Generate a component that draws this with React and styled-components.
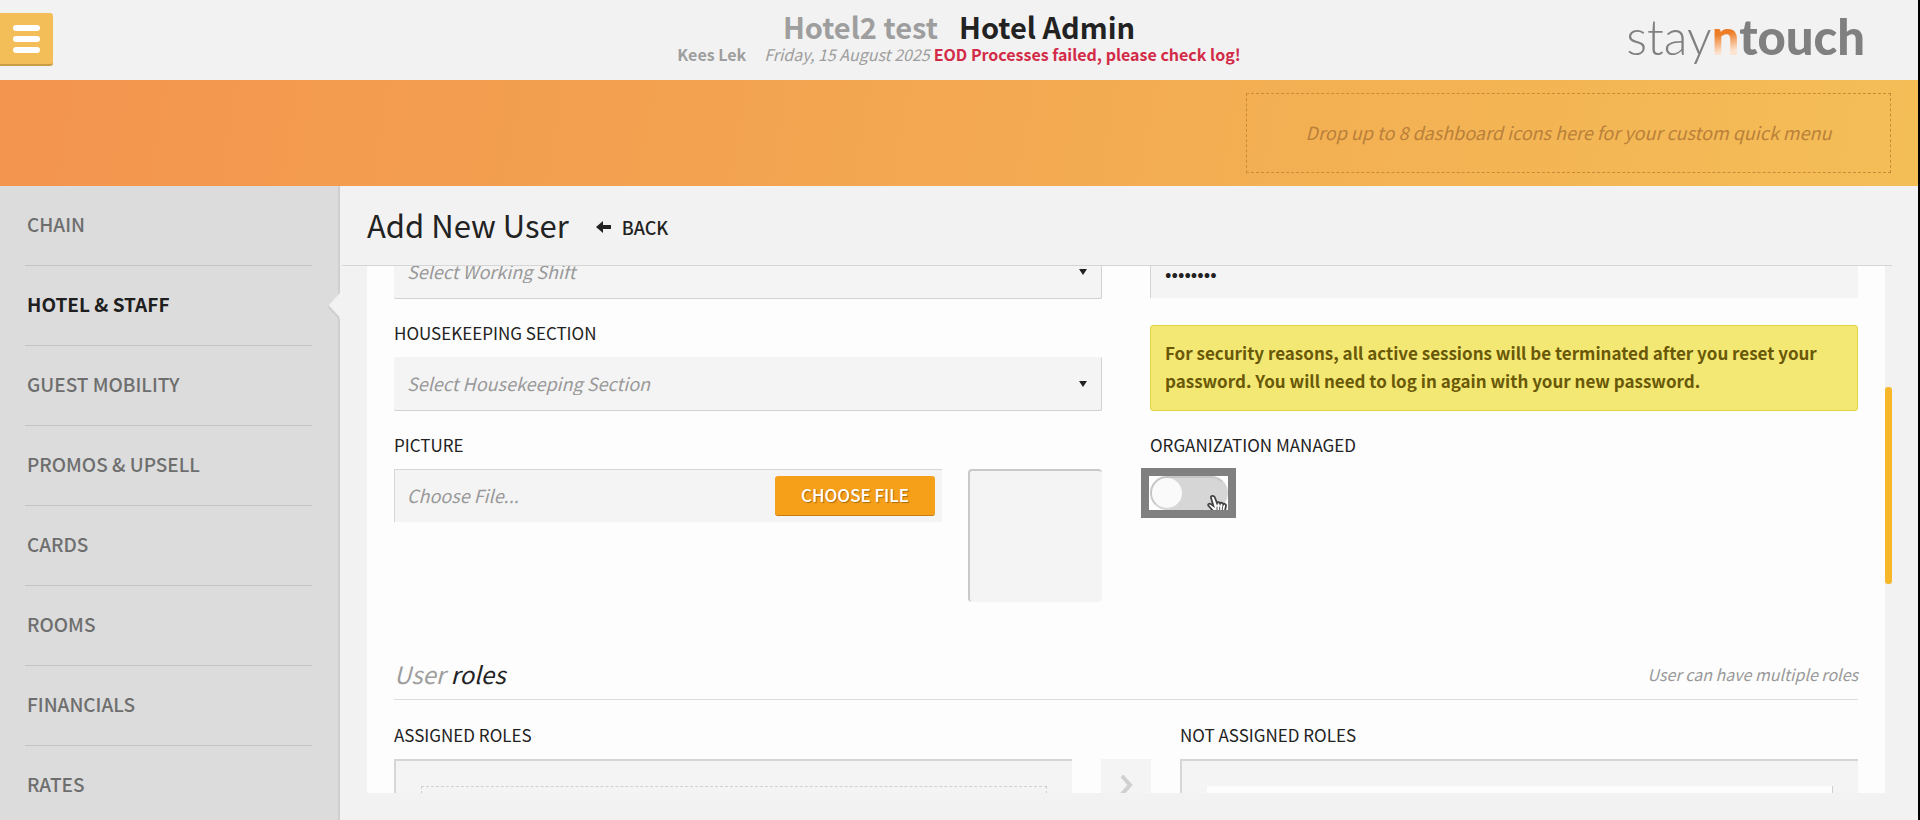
import styled, { createGlobalStyle } from "styled-components";

const GlobalStyle = createGlobalStyle`
  * {
    box-sizing: border-box;
  }

  body {
    margin: 0;
    background: #f2f2f2;
    color: #222;
    font-family: "Noto Sans CJK JP", "Open Sans", sans-serif;
    font-size: 18px;
    line-height: 24px;
  }

  button, input, select {
    font: inherit;
    color: inherit;
    margin: 0;
  }
`;

const Page = styled.div`
  display: flex;
  flex-direction: column;
  height: 100vh;
  overflow: hidden;
  border-right: 2px solid #000;
`;

const Header = styled.header`
  display: grid;
  grid-template-columns: 1fr auto 1fr;
  flex: none;
  height: 80px;
`;

const MenuButton = styled.button`
  display: flex;
  align-items: center;
  justify-content: center;
  width: 53px;
  height: 53px;
  margin-top: 13px;
  padding: 0;
  border: 0;
  border-bottom: 2px solid #c79d45;
  border-radius: 0 3px 3px 0;
  background: #f3be57;
`;

const HotelInfo = styled.div`
  padding-top: 10px;
  text-align: center;
`;

const HotelName = styled.h1`
  display: flex;
  justify-content: center;
  gap: 21px;
  margin: 0;
  font-size: 29px;
  font-weight: 700;
  line-height: 33px;
`;

const Muted = styled.span`
  color: #9e9e9e;
`;

const Status = styled.p`
  display: flex;
  justify-content: center;
  gap: 4px;
  margin: 0;
  font-size: 16px;
  line-height: 22px;
`;

const UserName = styled(Muted)`
  margin-right: 14px;
  font-weight: 700;
`;

const Today = styled.em`
  color: #9e9e9e;
`;

const Alert = styled.strong`
  color: #d32b47;
`;

const Logo = styled.a`
  justify-self: end;
  margin-right: 53px;
  color: #808080;
  font-family: Lato, sans-serif;
  font-size: 49px;
  line-height: 72px;
  font-weight: 300;
  text-decoration: none;

  b {
    font-weight: 900;
  }

  b:first-of-type {
    background: linear-gradient(170deg, #ec7c26 45%, #fce3cf 75%);
    background-clip: text;
    color: transparent;
  }
`;

const QuickMenu = styled.div`
  display: flex;
  justify-content: flex-end;
  flex: none;
  height: 106px;
  padding: 13px 27px 13px;
  background: linear-gradient(100deg, #f3944f, #f3a450 40%, #f4be57);
`;

const DropZone = styled.div`
  display: flex;
  align-items: center;
  justify-content: center;
  width: 645px;
  padding-bottom: 2px;
  border: 1px dashed #c98b36;
  color: #b9803a;
  font-size: 18px;
  font-style: italic;
`;

const Body = styled.div`
  display: flex;
  flex: 1;
  min-height: 0;
`;

const Sidebar = styled.nav`
  flex: none;
  width: 340px;
  padding: 0 28px 0 25px;
  overflow: hidden;
  background: #dcdcdc;
  box-shadow: inset -2px 0 #cfcfcf;
`;

const NavItem = styled.a`
  position: relative;
  display: block;
  height: 80px;
  padding: 26px 2px;
  border-bottom: 1px solid #c4c4c4;
  color: ${(props) => (props.$active ? "#1f1f1f" : "#6e6e6e")};
  font-size: 19px;
  font-weight: ${(props) => (props.$active ? 700 : 500)};
  text-decoration: none;
`;

const Notch = styled.svg`
  position: absolute;
  top: 26px;
  right: -28px;
`;

const Main = styled.main`
  display: flex;
  flex: 1;
  flex-direction: column;
  min-width: 0;
  padding: 0 26px 27px 0;
`;

const TitleBar = styled.div`
  display: flex;
  align-items: center;
  gap: 27px;
  flex: none;
  height: 80px;
  margin-left: 2px;
  padding-left: 25px;
  border-bottom: 1px solid #d6d6d6;
`;

const Title = styled.h2`
  margin: 0;
  padding-bottom: 2px;
  font-size: 31px;
  font-weight: 400;
  line-height: 40px;
`;

const BackLink = styled.a`
  display: flex;
  align-items: center;
  gap: 11px;
  padding-top: 2px;
  color: #222;
  font-size: 18px;
  font-weight: 500;
  text-decoration: none;
`;

const ScrollArea = styled.div`
  display: flex;
  flex: 1;
  min-height: 0;
  padding-left: 27px;
`;

const Panel = styled.div`
  flex: 1;
  min-width: 0;
  padding: 0 27px;
  overflow: hidden;
  background: #fdfdfd;
`;

const ScrollTrack = styled.div`
  flex: none;
  width: 7px;
`;

const ScrollThumb = styled.div`
  height: 37.4%;
  margin-top: 121px;
  border-radius: 3px;
  background: #f8b72b;
`;

// scrolled a little, the first row is cut by the title bar
const Columns = styled.div`
  display: grid;
  grid-template-columns: 1fr 1fr;
  gap: 48px;
  margin-top: -21px;
`;

const Column = styled.div`
  display: flex;
  flex-direction: column;
  gap: 22px;
`;

const Field = styled.div`
  display: flex;
  flex-direction: column;
  gap: 12px;
`;

const Label = styled.label`
  font-size: 17px;
  line-height: 24px;
`;

const SelectBox = styled.div`
  position: relative;

  select {
    display: block;
    width: 100%;
    height: 54px;
    padding: 0 32px 2px 13px;
    appearance: none;
    border: 0 solid #d2d2d2;
    border-width: 0 1px 1px 0;
    border-radius: 2px;
    background: #f4f4f4;
    color: #999;
    font-size: 18px;
    font-style: italic;
  }

  svg {
    position: absolute;
    top: 24px;
    right: 15px;
    pointer-events: none;
  }
`;

const TextInput = styled.input`
  width: 100%;
  height: 53px;
  padding: 0 14px;
  border: 0 solid #d6d6d6;
  border-width: 1px 0 0 1px;
  background: #f4f4f4;
  outline: 0;

  &[type="password"] {
    font-size: 19px;
  }
`;

const Warning = styled.p`
  margin: 5px 0 0;
  padding: 13px 14px 15px;
  border: 1px solid #e2d440;
  border-radius: 3px;
  background: #f4e874;
  color: #695807;
  font-size: 17px;
  font-weight: 700;
  line-height: 28px;
`;

const PictureRow = styled.div`
  display: flex;
  align-items: flex-start;
  gap: 26px;
`;

const FileBox = styled.div`
  display: flex;
  align-items: center;
  flex: 1;
  height: 53px;
  padding: 0 7px 0 12px;
  border: 0 solid #d6d6d6;
  border-width: 1px 0 0 1px;
  background: #f4f4f4;

  input {
    flex: 1;
    min-width: 0;
    padding: 0 0 2px;
    border: 0;
    background: none;
    font-size: 18px;
    font-style: italic;
    outline: 0;
  }

  input::placeholder {
    color: #999;
    opacity: 1;
  }
`;

const ChooseButton = styled.button`
  width: 160px;
  height: 40px;
  padding: 0 0 2px;
  border: 0;
  border-bottom: 1px solid #c67d10;
  border-radius: 3px;
  background: #f6a01a;
  color: #fff;
  font-size: 17px;
  font-weight: 500;
  text-shadow: 1px 1px 1px rgba(120, 70, 0, 0.6);
`;

const Preview = styled.div`
  width: 134px;
  height: 133px;
  border: 0 solid #c9c9c9;
  border-width: 2px 0 0 2px;
  border-radius: 4px;
  background: #f4f4f4;
`;

const ToggleFrame = styled.div`
  position: relative;
  display: flex;
  align-self: flex-start;
  width: 95px;
  height: 50px;
  margin: -1px 0 0 -9px;
  padding-left: 1px;
  overflow: hidden;
  border: 8px solid #808080;
  background: #fff;
`;

const Switch = styled.input`
  width: 100%;
  height: 34px;
  appearance: none;
  border: 2px solid #c6c6c6;
  border-right-color: #d6d6d6;
  border-bottom-color: #d6d6d6;
  border-radius: 17px;
  background: #d6d6d6;

  &::before {
    content: "";
    display: block;
    width: 30px;
    height: 30px;
    border-radius: 50%;
    background: #fafafa;
  }
`;

const Pointer = styled.svg`
  position: absolute;
  top: 19px;
  right: 1px;
  pointer-events: none;
`;

const SectionHead = styled.div`
  display: flex;
  align-items: center;
  justify-content: space-between;
  height: 48px;
  margin-top: 50px;
  padding-bottom: 3px;
  border-bottom: 1px solid #dcdcdc;
`;

const SectionTitle = styled.h3`
  margin: 0;
  font-size: 24px;
  font-style: italic;
  font-weight: 400;
  line-height: 32px;
`;

const Note = styled.em`
  color: #999;
  font-size: 16px;
`;

const Roles = styled.div`
  display: grid;
  grid-template-columns: 1fr 50px 1fr;
  column-gap: 29px;
  align-items: end;
  margin-top: 23px;
`;

const RoleBox = styled.div`
  height: 180px;
  padding: 25px;
  border: 0 solid #d6d6d6;
  border-width: 2px 0 0 2px;
  background: #f4f4f4;
`;

const RoleSlot = styled.div`
  height: 100%;
  border: ${(props) => (props.$empty ? "1px dashed #d0d0d0" : "0")};
  border-right: ${(props) => !props.$empty && "1px solid #d0d0d0"};
  background: ${(props) => (props.$empty ? "none" : "#fdfdfd")};
`;

const MoveButton = styled.button`
  display: flex;
  align-items: flex-start;
  justify-content: center;
  height: 180px;
  padding: 16px 0 0;
  border: 0;
  background: #f4f4f4;
`;

const links = [
  "CHAIN",
  "HOTEL & STAFF",
  "GUEST MOBILITY",
  "PROMOS & UPSELL",
  "CARDS",
  "ROOMS",
  "FINANCIALS",
  "RATES",
];

function Select({ id, placeholder, ...rest }) {
  return (
    <SelectBox>
      <select id={id} {...rest}>
        <option>{placeholder}</option>
      </select>
      <svg width="8" height="6" viewBox="0 0 8 6">
        <path d="M0 0h8L4 6z" fill="#222" />
      </svg>
    </SelectBox>
  );
}

export default function App() {
  return (
    <Page>
      <GlobalStyle />
      <Header>
        <MenuButton aria-label="Menu">
          <svg width="27" height="28" viewBox="0 0 27 28" fill="#fff">
            <rect y="0" width="27" height="6" rx="3" />
            <rect y="11" width="27" height="6" rx="3" />
            <rect y="22" width="27" height="6" rx="3" />
          </svg>
        </MenuButton>
        <HotelInfo>
          <HotelName>
            <Muted>Hotel2 test</Muted>
            <span>Hotel Admin</span>
          </HotelName>
          <Status>
            <UserName>Kees Lek</UserName>
            <Today>Friday, 15 August 2025</Today>
            <Alert>EOD Processes failed, please check log!</Alert>
          </Status>
        </HotelInfo>
        <Logo href="#">
          stay<b>n</b><b>touch</b>
        </Logo>
      </Header>

      <QuickMenu>
        <DropZone>
          Drop up to 8 dashboard icons here for your custom quick menu
        </DropZone>
      </QuickMenu>

      <Body>
        <Sidebar>
          {links.map((link) => (
            <NavItem key={link} href="#" $active={link === "HOTEL & STAFF"}>
              {link}
              {link === "HOTEL & STAFF" && (
                <Notch width="14" height="28" viewBox="0 0 14 28">
                  <path d="M14 1L2 14l12 13z" fill="#f2f2f2" />
                  <path
                    d="M2 14l11 12"
                    fill="none"
                    stroke="#cfcfcf"
                    strokeWidth="2"
                  />
                </Notch>
              )}
            </NavItem>
          ))}
        </Sidebar>

        <Main>
          <TitleBar>
            <Title>Add New User</Title>
            <BackLink href="#">
              <svg width="15" height="12" viewBox="0 0 15 12">
                <path d="M0 6l7-6v4h8v4H7v4z" fill="#222" />
              </svg>
              BACK
            </BackLink>
          </TitleBar>

          <ScrollArea>
            <Panel>
              <Columns>
                <Column>
                  <Select
                    aria-label="Working shift"
                    placeholder="Select Working Shift"
                  />
                  <Field>
                    <Label htmlFor="section">HOUSEKEEPING SECTION</Label>
                    <Select
                      id="section"
                      placeholder="Select Housekeeping Section"
                    />
                  </Field>
                  <Field>
                    <Label htmlFor="picture">PICTURE</Label>
                    <PictureRow>
                      <FileBox>
                        <input
                          id="picture"
                          type="text"
                          placeholder="Choose File..."
                          readOnly
                        />
                        <ChooseButton>CHOOSE FILE</ChooseButton>
                      </FileBox>
                      <Preview />
                    </PictureRow>
                  </Field>
                </Column>

                <Column>
                  <TextInput
                    type="password"
                    aria-label="Password"
                    defaultValue="password"
                  />
                  <Warning>
                    For security reasons, all active sessions will be terminated
                    after you reset your password. You will need to log in again
                    with your new password.
                  </Warning>
                  <Field>
                    <Label htmlFor="managed">ORGANIZATION MANAGED</Label>
                    <ToggleFrame>
                      <Switch id="managed" type="checkbox" />
                      <Pointer width="20" height="18" viewBox="0 0 22 20">
                        <path
                          d="M6 1c-1.500 0-2 1-1.600 2.300L7 12l-3-2c-1.500-1-3.500.5-2.500 2L7 18v3h13v-4l1-5c.3-2-2-3-3-1.500 0-2-2.700-2.500-3.500-1C14 7.800 11.500 7.500 11 9L8.500 2.500C8 1.500 7.200 1 6 1z"
                          fill="#fff"
                          stroke="#444"
                          strokeWidth="2"
                        />
                        <path
                          d="M11 13v4M14 13v4M17 13v4"
                          stroke="#444"
                          strokeWidth="1"
                        />
                      </Pointer>
                    </ToggleFrame>
                  </Field>
                </Column>
              </Columns>

              <SectionHead>
                <SectionTitle>
                  <Muted>User</Muted> roles
                </SectionTitle>
                <Note>User can have multiple roles</Note>
              </SectionHead>

              <Roles>
                <Field>
                  <Label as="span">ASSIGNED ROLES</Label>
                  <RoleBox>
                    <RoleSlot $empty />
                  </RoleBox>
                </Field>
                <MoveButton aria-label="Move role">
                  <svg width="13" height="20" viewBox="0 0 13 20">
                    <path
                      d="M2 1l8 9-8 9"
                      fill="none"
                      stroke="#d0d0d0"
                      strokeWidth="4"
                    />
                  </svg>
                </MoveButton>
                <Field>
                  <Label as="span">NOT ASSIGNED ROLES</Label>
                  <RoleBox>
                    <RoleSlot />
                  </RoleBox>
                </Field>
              </Roles>
            </Panel>
            <ScrollTrack>
              <ScrollThumb />
            </ScrollTrack>
          </ScrollArea>
        </Main>
      </Body>
    </Page>
  );
}
